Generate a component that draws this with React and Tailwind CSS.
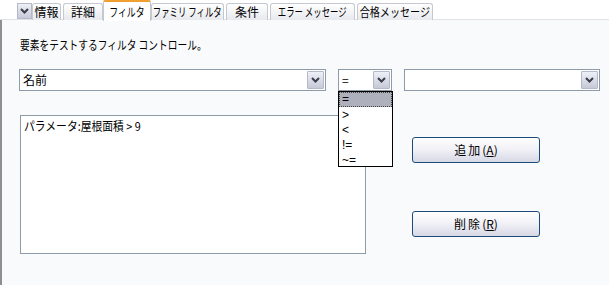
import React from "react";

const font = { fontFamily: '"Noto Sans CJK JP", "Liberation Sans", sans-serif' };
const latin = { fontFamily: '"Liberation Sans", sans-serif' };

function Chevron() {
  return (
    <svg width="9" height="6" viewBox="0 0 9 6">
      <path d="M1 1 L4.5 4.5 L8 1" fill="none" stroke="#3c3c4a" strokeWidth="2" />
    </svg>
  );
}

function DropBtn() {
  return (
    <div className="w-[17px] h-[18px] flex items-center justify-center border border-[#b4b8c8] bg-gradient-to-b from-[#eef0f6] to-[#c6cad8] rounded-[1px]">
      <Chevron />
    </div>
  );
}

function Combo({ w, text }) {
  return (
    <div className={`${w} h-[22px] border border-[#8d9aa8] bg-white flex items-center justify-between pl-[3px] pr-[1px]`}>
      <span className="text-[12px] leading-[14px] text-black">{text}</span>
      <DropBtn />
    </div>
  );
}

function Tab({ label, w, selected, sx }) {
  const inner = <span className={`inline-block whitespace-nowrap ${sx}`}>{label}</span>;
  if (selected) {
    return (
      <div className={`${w} h-[21px] bg-white border-x border-[#c4c8d0] border-t-2 border-t-[#f0a030] rounded-t-[2px] flex items-center justify-center text-[12px] leading-[14px] -mb-[1px] relative z-10`}>
        {inner}
      </div>
    );
  }
  return (
    <div className={`${w} h-[17px] mt-[3px] bg-gradient-to-b from-white to-[#e8e9ee] border border-b-0 border-[#c4c8d0] rounded-t-[3px] flex items-center justify-center text-[12px] leading-[14px]`}>
      {inner}
    </div>
  );
}

export default function App() {
  return (
    <div className="w-[609px] h-[285px] bg-white overflow-hidden text-black" style={font}>
      <div className="h-[20px] flex items-start pl-[17px] border-b border-[#e0e2e8]">
        <div className="w-[15px] h-[16px] mt-[3px] flex items-center justify-center border border-[#b4b8c8] bg-gradient-to-b from-[#eef0f6] to-[#c6cad8]">
          <Chevron />
        </div>
        <Tab label="情報" w="w-[29px]" sx="" />
        <div className="w-[2px]" />
        <Tab label="詳細" w="w-[40px]" sx="" />
        <Tab label="フィルタ" w="w-[48px]" selected sx="scale-x-[0.74]" />
        <Tab label="ファミリ フィルタ" w="w-[73px]" sx="scale-x-[0.7]" />
        <div className="w-[2px]" />
        <Tab label="条件" w="w-[42px]" sx="" />
        <div className="w-[2px]" />
        <Tab label="エラー メッセージ" w="w-[85px]" sx="scale-x-[0.7]" />
        <div className="w-[2px]" />
        <Tab label="合格メッセージ" w="w-[76px]" sx="scale-x-[0.84]" />
      </div>
      <div className="h-[265px] bg-[#f9fafc] border-l-2 border-[#8f8f8f] pl-[17px] pt-[18px] relative">
        <div className="ml-[1px] text-[12px] leading-[14px]">
          <span className="inline-block whitespace-nowrap origin-left scale-x-[0.81]">要素をテストするフィルタ コントロール。</span>
        </div>
        <div className="flex mt-[17px] gap-[12px] relative">
          <Combo w="w-[307px]" text="名前" />
          <div className="relative">
            <Combo w="w-[54px]" text="=" />
            <div className="absolute left-0 top-[22px] w-[55px] h-[76px] bg-white border border-black z-20 text-[12px] leading-[14px]" style={latin}>
              <div className="h-[15px] bg-[#aeb0bc] border border-dotted border-[#404040] pl-[2px] leading-[12px]">=</div>
              <div className="pl-[3px] h-[15px] mt-[1px]">&gt;</div>
              <div className="pl-[3px] h-[15px]">&lt;</div>
              <div className="pl-[3px] h-[15px]">!=</div>
              <div className="pl-[3px] h-[14px]">~=</div>
            </div>
          </div>
          <Combo w="w-[196px]" text="" />
        </div>
        <div className="flex mt-[24px]">
          <div className="ml-[1px] w-[346px] h-[139px] bg-white border border-[#8d9aa8] px-[3px] pt-[3px] text-[12px] leading-[14px]">
            <span className="inline-block whitespace-nowrap origin-left scale-x-[0.9]">パラメータ:屋根面積 &gt; 9</span>
          </div>
          <div className="ml-[46px] pt-[22px] flex flex-col gap-[48px]">
            <button className="w-[128px] h-[26px] border border-[#1c4a7a] rounded-[3px] bg-gradient-to-b from-white via-[#f0f0f6] to-[#d6d8e4] text-[12px] leading-[14px] flex items-center justify-center">
              <span className="tracking-[2px]">追加</span>(<span className="underline">A</span>)
            </button>
            <button className="w-[128px] h-[26px] border border-[#1c4a7a] rounded-[3px] bg-gradient-to-b from-white via-[#f0f0f6] to-[#d6d8e4] text-[12px] leading-[14px] flex items-center justify-center">
              <span className="tracking-[2px]">削除</span>(<span className="underline">R</span>)
            </button>
          </div>
        </div>
      </div>
    </div>
  );
}
